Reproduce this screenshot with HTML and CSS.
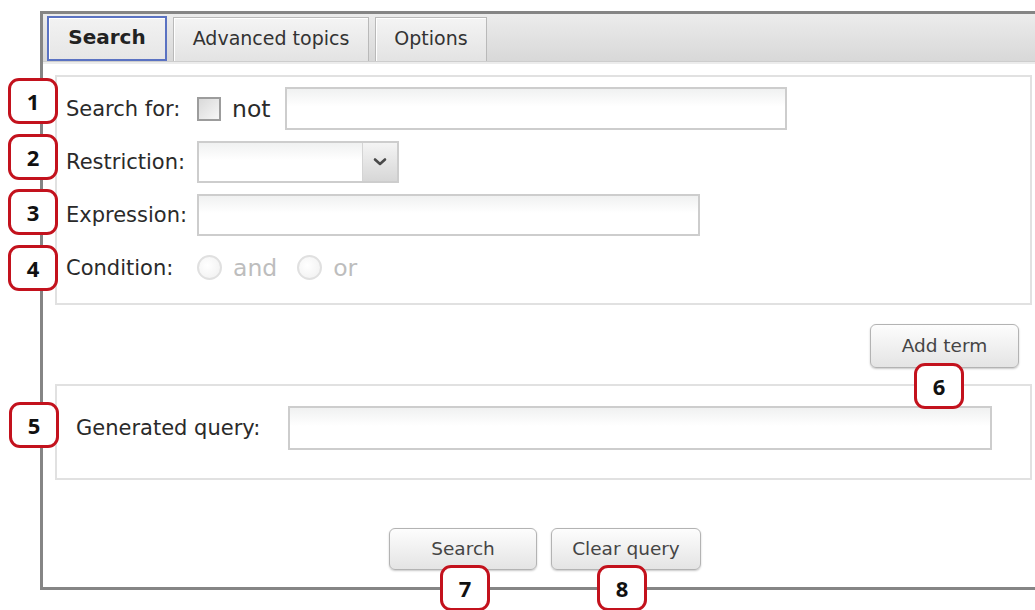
FILE: index.html
```html
<!DOCTYPE html>
<html lang="en">
<head>
<meta charset="utf-8">
<title>Query builder</title>
<link rel="stylesheet" href="styles.css">
</head>
<body>
<div class="page">
  <div class="frame">
    <div class="tabbar">
      <div class="tab active">Search</div>
      <div class="tab">Advanced topics</div>
      <div class="tab">Options</div>
    </div>
    <div class="content">
      <div class="panel terms">
        <div class="row">
          <span class="lbl">Search for:</span>
          <span class="check"></span>
          <span class="opt">not</span>
          <input class="field f-search" type="text">
        </div>
        <div class="row">
          <span class="lbl">Restriction:</span>
          <div class="select">
            <span class="select-val"></span>
            <span class="select-btn">
              <svg width="14" height="10" viewBox="0 0 14 10"><path d="M2 2.5 L7 7 L12 2.5" fill="none" stroke="#4a4a4a" stroke-width="2.6" stroke-linecap="round" stroke-linejoin="round"/></svg>
            </span>
          </div>
        </div>
        <div class="row">
          <span class="lbl">Expression:</span>
          <input class="field f-expr" type="text">
        </div>
        <div class="row">
          <span class="lbl">Condition:</span>
          <span class="radio"></span>
          <span class="opt dis">and</span>
          <span class="radio r-or"></span>
          <span class="opt dis">or</span>
        </div>
      </div>
      <div class="add-row">
        <button class="btn btn-add" type="button">Add term</button>
      </div>
      <div class="panel query">
        <span class="lbl-q">Generated query:</span>
        <input class="field f-query" type="text">
      </div>
      <div class="actions">
        <button class="btn btn-search" type="button">Search</button>
        <button class="btn btn-clear" type="button">Clear query</button>
      </div>
    </div>
  </div>

  <span class="badge b1">1</span>
  <span class="badge b2">2</span>
  <span class="badge b3">3</span>
  <span class="badge b4">4</span>
  <span class="badge b5">5</span>
  <span class="badge b6">6</span>
  <span class="badge b7">7</span>
  <span class="badge b8">8</span>
</div>
</body>
</html>
```

FILE: styles.css
```css
html, body {
  margin: 0;
  padding: 0;
  background: #ffffff;
  overflow: hidden;
}

.page {
  position: relative;
  width: 1035px;
  height: 610px;
  overflow: hidden;
  font-family: "DejaVu Sans", Verdana, sans-serif;
  color: #2a2a2a;
}

/* window frame */
.frame {
  margin: 11px 0 0 40px;
  width: 1004px;
  border: 3px solid #858585;
  background: #ffffff;
}

/* tab strip */
.tabbar {
  display: flex;
  align-items: flex-end;
  gap: 6px;
  height: 47px;
  padding-left: 4px;
  background: linear-gradient(#ececec, #d8d8d8);
  border-bottom: 1px solid #cdcdcd;
  box-shadow: 0 2px 0 #ececec;
}

.tab {
  display: flex;
  align-items: center;
  justify-content: center;
  box-sizing: border-box;
  height: 44px;
  padding: 0 0 3px;
  font-size: 19px;
  color: #333;
  background: linear-gradient(#f4f4f4, #e3e3e3);
  border: 1px solid #b9b9b9;
  border-bottom: none;
  box-shadow: inset 1px 1px 0 #ffffff;
}

.tab.active {
  width: 120px;
  height: 45px;
  font-size: 20px;
  font-weight: bold;
  color: #222;
  border: 2px solid #5a72c2;
  background: linear-gradient(#f2f2f2, #e6e6e6);
}

.tab:nth-child(2) { width: 196px; }
.tab:nth-child(3) { width: 112px; }

.content {
  padding: 13px 15px 17px 12px;
}

/* grouped boxes */
.panel {
  border: 2px solid #e1e1e1;
  background: #ffffff;
}

.terms {
  display: flex;
  flex-direction: column;
  gap: 10px;
  padding: 10px 0 14px 9px;
}

.row {
  display: flex;
  align-items: center;
  height: 43px;
}

.lbl {
  width: 131px;
  font-size: 21px;
  color: #2a2a2a;
  white-space: nowrap;
}

.opt {
  margin-left: 11px;
  font-size: 23.5px;
  color: #2a2a2a;
}

.opt.dis {
  color: #bdbdbd;
}

.check {
  width: 24px;
  height: 24px;
  box-sizing: border-box;
  border: 2px solid #9c9c9c;
  background: linear-gradient(135deg, #d9d9d9, #f7f7f7);
}

.radio {
  width: 25px;
  height: 25px;
  box-sizing: border-box;
  border-radius: 50%;
  border: 2px solid #e0e0e0;
  background: radial-gradient(circle at 40% 40%, #ffffff, #efefef);
}

.radio.r-or {
  margin-left: 20px;
}

/* text inputs */
.field {
  box-sizing: border-box;
  margin: 0;
  padding: 0 8px;
  border: 2px solid #cdcdcd;
  background: linear-gradient(#f0f1f1, #ffffff 45%);
  font: inherit;
  outline: none;
}

.f-search {
  margin-left: 14px;
  width: 502px;
  height: 43px;
}

.f-expr {
  width: 503px;
  height: 42px;
}

.f-query {
  width: 704px;
  height: 44px;
}

/* drop-down */
.select {
  display: flex;
  box-sizing: border-box;
  width: 202px;
  height: 42px;
  border: 2px solid #cdcdcd;
  background: linear-gradient(#f0f1f1, #ffffff 45%);
}

.select-val {
  flex: 1;
}

.select-btn {
  display: flex;
  align-items: center;
  justify-content: center;
  width: 34px;
  border-left: 1px solid #d4d4d4;
  background: linear-gradient(#f4f4f4, #d7d7d7);
}

/* buttons */
.btn {
  box-sizing: border-box;
  margin: 0;
  padding: 0 0 2px;
  font-family: "DejaVu Sans", Verdana, sans-serif;
  font-size: 18.5px;
  color: #454545;
  border: 1px solid #b3b3b3;
  border-radius: 6px;
  background: linear-gradient(#fdfdfd, #e4e4e4);
  box-shadow: 0 1px 2px rgba(0, 0, 0, 0.22);
}

.add-row {
  display: flex;
  justify-content: flex-end;
  padding: 19px 13px 16px 0;
}

.btn-add {
  width: 149px;
  height: 44px;
}

.query {
  display: flex;
  align-items: center;
  padding: 20px 0 28px 19px;
}

.lbl-q {
  width: 212px;
  font-size: 21px;
  color: #2a2a2a;
  white-space: nowrap;
}

.actions {
  display: flex;
  justify-content: center;
  gap: 14px;
  padding-top: 48px;
  padding-left: 3px;
}

.btn-search {
  width: 148px;
  height: 42px;
}

.btn-clear {
  width: 150px;
  height: 42px;
}

/* numbered callouts laid over the form */
.badge {
  position: absolute;
  display: flex;
  align-items: center;
  justify-content: center;
  box-sizing: border-box;
  width: 50px;
  height: 46px;
  border: 3px solid #c3121d;
  border-radius: 11px;
  background: #ffffff;
  font-family: "Open Sans", "DejaVu Sans", sans-serif;
  font-weight: 700;
  font-size: 22px;
  color: #111;
}

.b1 { left: 8px;   top: 78px; }
.b2 { left: 8px;   top: 134px; }
.b3 { left: 8px;   top: 189px; }
.b4 { left: 8px;   top: 245px; }
.b5 { left: 9px;   top: 402px; }
.b6 { left: 914px; top: 363px; }
.b7 { left: 440px; top: 565px; }
.b8 { left: 597px; top: 565px; }
```
